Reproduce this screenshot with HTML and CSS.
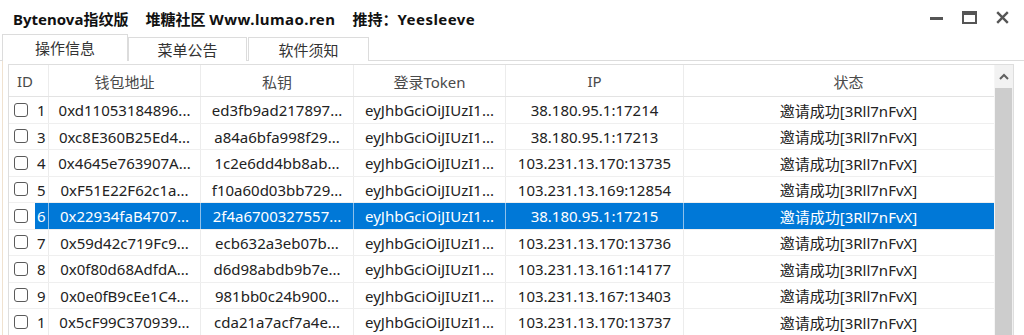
FILE: index.html
```html
<!DOCTYPE html>
<html lang="zh">
<head>
<meta charset="utf-8">
<title>Bytenova指纹版</title>
<link rel="stylesheet" href="styles.css">
</head>
<body>
<div class="window">
  <div class="titlebar">
    <div class="title">
      <span>Bytenova指纹版</span>
      <span>堆糖社区 <span class="lat">Www.lumao.ren</span></span>
      <span>推持：<span class="lat">Yeesleeve</span></span>
    </div>
    <div class="controls">
      <svg class="ctl" width="13" height="13" viewBox="0 0 13 13"><rect x="0" y="6" width="13" height="3" fill="#555"/></svg>
      <svg class="ctl" width="15" height="13" viewBox="0 0 15 13"><rect x="1" y="1" width="13" height="11" fill="none" stroke="#555" stroke-width="2"/><rect x="0" y="0" width="15" height="4" fill="#555"/></svg>
      <svg class="ctl" width="13" height="13" viewBox="0 0 13 13"><path d="M1.2 1.2 L11.8 11.8 M11.8 1.2 L1.2 11.8" stroke="#555" stroke-width="2.4" fill="none"/></svg>
    </div>
  </div>
  <div class="tabs">
    <div class="tab active">操作信息</div>
    <div class="tab t2">菜单公告</div>
    <div class="tab t3">软件须知</div>
  </div>
  <div class="panel">
    <div class="table">
      <div class="row head">
        <div class="c cid">ID</div>
        <div class="c">钱包地址</div>
        <div class="c">私钥</div>
        <div class="c">登录Token</div>
        <div class="c">IP</div>
        <div class="c">状态</div>
      </div>
      <div class="row"><div class="c cid"><span class="cb"></span><span class="num">1</span></div><div class="c">0xd11053184896...</div><div class="c">ed3fb9ad217897...</div><div class="c">eyJhbGciOiJIUzI1...</div><div class="c">38.180.95.1:17214</div><div class="c">邀请成功[3Rll7nFvX]</div></div>
      <div class="row"><div class="c cid"><span class="cb"></span><span class="num">3</span></div><div class="c">0xc8E360B25Ed4...</div><div class="c">a84a6bfa998f29...</div><div class="c">eyJhbGciOiJIUzI1...</div><div class="c">38.180.95.1:17213</div><div class="c">邀请成功[3Rll7nFvX]</div></div>
      <div class="row"><div class="c cid"><span class="cb"></span><span class="num">4</span></div><div class="c">0x4645e763907A...</div><div class="c">1c2e6dd4bb8ab...</div><div class="c">eyJhbGciOiJIUzI1...</div><div class="c">103.231.13.170:13735</div><div class="c">邀请成功[3Rll7nFvX]</div></div>
      <div class="row"><div class="c cid"><span class="cb"></span><span class="num">5</span></div><div class="c">0xF51E22F62c1a...</div><div class="c">f10a60d03bb729...</div><div class="c">eyJhbGciOiJIUzI1...</div><div class="c">103.231.13.169:12854</div><div class="c">邀请成功[3Rll7nFvX]</div></div>
      <div class="row sel"><div class="c cid"><span class="cb"></span><span class="num">6</span></div><div class="c">0x22934faB4707...</div><div class="c">2f4a6700327557...</div><div class="c">eyJhbGciOiJIUzI1...</div><div class="c">38.180.95.1:17215</div><div class="c">邀请成功[3Rll7nFvX]</div></div>
      <div class="row"><div class="c cid"><span class="cb"></span><span class="num">7</span></div><div class="c">0x59d42c719Fc9...</div><div class="c">ecb632a3eb07b...</div><div class="c">eyJhbGciOiJIUzI1...</div><div class="c">103.231.13.170:13736</div><div class="c">邀请成功[3Rll7nFvX]</div></div>
      <div class="row"><div class="c cid"><span class="cb"></span><span class="num">8</span></div><div class="c">0x0f80d68AdfdA...</div><div class="c">d6d98abdb9b7e...</div><div class="c">eyJhbGciOiJIUzI1...</div><div class="c">103.231.13.161:14177</div><div class="c">邀请成功[3Rll7nFvX]</div></div>
      <div class="row"><div class="c cid"><span class="cb"></span><span class="num">9</span></div><div class="c">0x0e0fB9cEe1C4...</div><div class="c">981bb0c24b900...</div><div class="c">eyJhbGciOiJIUzI1...</div><div class="c">103.231.13.167:13403</div><div class="c">邀请成功[3Rll7nFvX]</div></div>
      <div class="row"><div class="c cid"><span class="cb"></span><span class="num">1</span></div><div class="c">0x5cF99C370939...</div><div class="c">cda21a7acf7a4e...</div><div class="c">eyJhbGciOiJIUzI1...</div><div class="c">103.231.13.170:13737</div><div class="c">邀请成功[3Rll7nFvX]</div></div>
      <div class="scrollbar">
        <div class="sb-up"><svg width="10" height="7" viewBox="0 0 10 7"><path d="M1 6 L5 2 L9 6" stroke="#606060" stroke-width="2" fill="none"/></svg></div>
        <div class="sb-thumb"></div>
      </div>
    </div>
  </div>
</div>
</body>
</html>
```
FILE: styles.css
```css
* { box-sizing: border-box; }
html, body { margin: 0; padding: 0; }
body {
  width: 1024px;
  height: 335px;
  overflow: hidden;
  background: #ffffff;
  font-family: "Noto Sans", "Noto Sans CJK SC", sans-serif;
  color: #222;
}
.window {
  width: 1024px;
  height: 335px;
  display: flex;
  flex-direction: column;
  overflow: hidden;
}
.titlebar {
  height: 35px;
  display: flex;
  align-items: center;
  justify-content: space-between;
  padding-left: 13px;
  padding-right: 15px;
  flex: none;
}
.title {
  display: flex;
  gap: 17px;
  font-weight: bold;
  font-size: 15px;
  color: #111;
  white-space: nowrap;
  margin-top: 1px;
}
.lat { letter-spacing: 0.45px; }
.controls {
  display: flex;
  align-items: center;
  gap: 19px;
}
.ctl { display: block; }
.tabs {
  height: 26px;
  flex: none;
  display: flex;
  align-items: flex-end;
  padding-left: 2px;
  border-bottom: 1px solid #dcdcdc;
}
.tab {
  height: 24px;
  border: 1px solid #dcdcdc;
  border-bottom: none;
  font-size: 15px;
  color: #333;
  display: flex;
  align-items: center;
  justify-content: center;
  margin-bottom: -1px;
  background: #fff;
}
.tab.active { height: 27px; width: 126px; padding-bottom: 2px; }
.tab.t2 { width: 119px; }
.tab.t3 { width: 121px; margin-left: 1px; }
.panel {
  flex: 1;
  padding: 3px 10px 0 5px;
  border-left: 1px solid #f0e2d0;
  margin-left: 2px;
}
.table {
  position: relative;
  width: 1006px;
  height: 100%;
  border: 1px solid #dedede;
  border-bottom: none;
  overflow: hidden;
}
.row {
  display: grid;
  grid-template-columns: 39px 152px 153px 152px 178px 1fr;
  height: 26.5px;
  border-bottom: 1px solid #efefef;
  font-size: 15px;
}
.row.head {
  height: 32px;
  border-bottom: 1px solid #e3e3e3;
  color: #4a4a4a;
}
.c {
  display: flex;
  align-items: center;
  justify-content: center;
  white-space: nowrap;
  overflow: hidden;
  border-left: 1px solid #ececec;
  padding-top: 1px;
}
.c:first-child { border-left: none; }
.row.head .c.cid { justify-content: flex-start; padding-left: 8px; }
.c.cid { justify-content: flex-start; padding-left: 5px; padding-top: 0; }
.cb {
  width: 14px;
  height: 14px;
  border: 1px solid #5a5a5a;
  border-radius: 3px;
  background: #fff;
  flex: none;
  margin-right: 7px;
}
.num {
  flex: 1;
  align-self: stretch;
  display: flex;
  align-items: center;
  padding-left: 2px;
  padding-top: 1px;
}
.row.sel .c { background: #0078d7; color: #fff; border-left-color: #8ec0ea; }
.row.sel .c.cid { background: #fff; }
.row.sel .num { background: #0078d7; color: #fff; }
.scrollbar {
  position: absolute;
  top: 0;
  right: 0;
  width: 19px;
  bottom: 0;
  background: #f0f0f0;
  border-left: 1px solid #f6f6f6;
  display: flex;
  flex-direction: column;
}
.sb-up {
  height: 23px;
  display: flex;
  align-items: center;
  justify-content: center;
  background: #f2f2f2;
  flex: none;
}
.sb-thumb {
  flex: 1;
  background: #cdcdcd;
  margin-right: 1px;
}
```
